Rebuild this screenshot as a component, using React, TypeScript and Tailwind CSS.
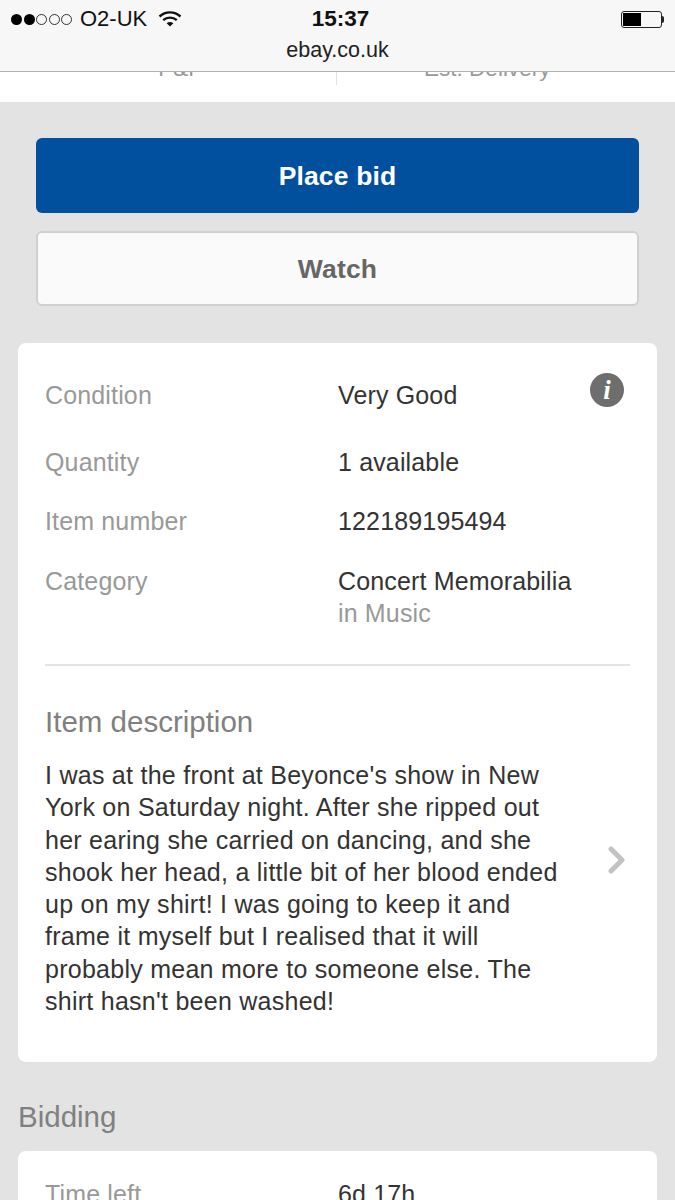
const font = "font-['Liberation_Sans',Arial,sans-serif]";

function Row({ label, value, sub, className }: { label: string; value: string; sub?: string; className: string }) {
  return (
    <div className={`flex ${className}`}>
      <div className="w-[293px] text-[#999999]">{label}</div>
      <div>
        <div className="text-[#333333]">{value}</div>
        {sub && <div className="text-[#999999]">{sub}</div>}
      </div>
    </div>
  );
}

function Wifi() {
  return (
    <svg width="24" height="18" viewBox="0 0 24 18" fill="none" stroke="#111" strokeWidth="2.4" className="ml-[11px]">
      <path d="M1.5 6.5C7.5 1 16.5 1 22.5 6.5" />
      <path d="M5.2 10.2C9 6.8 15 6.8 18.8 10.2" />
      <path d="M12 16.6 8.6 13.2C10.6 11.6 13.4 11.6 15.4 13.2Z" fill="#111" stroke="none" />
    </svg>
  );
}

export default function App() {
  return (
    <div className={`h-[1200px] w-[675px] overflow-hidden bg-[#e3e3e3] ${font} text-[25px] leading-[32px] tracking-[0.15px]`}>
      <header className="h-[72px] border-b border-[#b2b2b2] bg-[#f7f7f7] tracking-normal">
        <div className="relative flex h-[38px] items-center pl-[11px] pr-[11px]">
          <div className="flex items-center gap-[1.5px]">
            {[0, 1].map((i) => (
              <span key={i} className="h-[11px] w-[11px] rounded-full bg-black" />
            ))}
            {[0, 1, 2].map((i) => (
              <span key={i} className="h-[11px] w-[11px] rounded-full border border-[#333]" />
            ))}
          </div>
          <span className="ml-[8px] text-[22px] leading-[24px] text-[#111]">O2-UK</span>
          <Wifi />
          <span className="absolute left-[6px] right-0 text-center text-[22.5px] font-bold leading-[24px] text-[#111]">15:37</span>
          <div className="ml-auto flex items-center">
            <div className="flex h-[17px] w-[41px] rounded-[3px] border border-[#222] p-[1px]">
              <div className="h-full w-[18px] bg-black" />
            </div>
            <div className="h-[7px] w-[2px] rounded-r-full bg-[#222]" />
          </div>
        </div>
        <div className="text-center text-[21.5px] leading-[24px] text-[#222]">ebay.co.uk</div>
      </header>

      <div className="relative grid h-[30px] grid-cols-2 overflow-hidden bg-white text-[22.5px] tracking-normal text-[#999999]">
        <div className="-mt-[16px] h-[25px] pl-[24px] text-center leading-[25px]">P&amp;P</div>
        <div className="-mt-[16px] h-[25px] pr-[38px] text-center leading-[25px]">Est. Delivery</div>
        <div className="absolute left-[336px] top-0 h-[13px] w-px bg-[#e2e2e2]" />
      </div>

      <div className="px-[36px] pt-[36px]">
        <button className="flex h-[75px] w-full items-center justify-center rounded-[6px] bg-[#01509e] text-[26.5px] font-bold text-white">
          Place bid
        </button>
        <button className="mt-[18px] flex h-[75px] w-full items-center justify-center rounded-[6px] border-2 border-[#d0d0d0] bg-[#fafafa] text-[26.5px] font-bold text-[#666666]">
          Watch
        </button>
      </div>

      <section className="relative mx-[18px] mt-[37px] h-[719px] rounded-[8px] bg-white px-[27px] pt-[36px]">
        <Row label="Condition" value="Very Good" className="" />
        <div className="absolute right-[33px] top-[30px] flex h-[34px] w-[34px] items-center justify-center rounded-full bg-[#6e6e6e] font-['Liberation_Serif',serif] text-[27px] font-bold italic leading-none text-white">
          i
        </div>
        <Row label="Quantity" value="1 available" className="mt-[35px]" />
        <Row label="Item number" value="122189195494" className="mt-[27px]" />
        <Row label="Category" value="Concert Memorabilia" sub="in Music" className="mt-[28px]" />
        <div className="mt-[35px] border-t-2 border-[#e4e4e4]" />
        <h2 className="mt-[40px] text-[29.5px] leading-[32px] tracking-normal text-[#808080]">Item description</h2>
        <p className="mt-[21px] w-[518px] leading-[32.3px] tracking-[0.26px] text-[#333333]">
          I was at the front at Beyonce's show in New York on Saturday night. After she ripped out her earing she carried on dancing, and she shook her head, a little bit of her blood ended up on my shirt! I was going to keep it and frame it myself but I realised that it will probably mean more to someone else. The shirt hasn't been washed!
        </p>
        <svg width="20" height="28" viewBox="0 0 20 28" fill="none" stroke="#c2c2c2" strokeWidth="5" strokeLinecap="round" strokeLinejoin="round" className="absolute right-[30px] top-[503px]">
          <path d="M4 3 15 14 4 25" />
        </svg>
      </section>

      <h2 className="ml-[18px] mt-[39px] text-[29.5px] leading-[32px] tracking-normal text-[#808080]">Bidding</h2>

      <section className="mx-[18px] mt-[18px] h-[100px] rounded-[8px] bg-white px-[27px] pt-[27px]">
        <Row label="Time left" value="6d 17h" className="" />
      </section>
    </div>
  );
}
